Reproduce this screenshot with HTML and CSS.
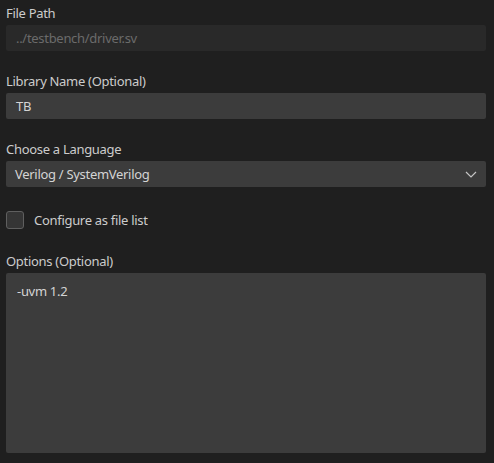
FILE: index.html
```html
<!DOCTYPE html>
<html>
<head>
<meta charset="utf-8">
<link rel="stylesheet" href="styles.css">
</head>
<body>
<div class="form">
  <div class="field">
    <div class="label">File Path</div>
    <div class="input disabled">../testbench/driver.sv</div>
  </div>
  <div class="field">
    <div class="label">Library Name (Optional)</div>
    <div class="input">TB</div>
  </div>
  <div class="field">
    <div class="label">Choose a Language</div>
    <div class="input select">
      <span class="select-text">Verilog / SystemVerilog</span>
      <svg class="chevron" width="12" height="7" viewBox="0 0 12 7"><path d="M1 1 L6 6 L11 1" fill="none" stroke="#c5c5c5" stroke-width="1.2"/></svg>
    </div>
  </div>
  <div class="check-row">
    <span class="checkbox"></span>
    <span class="check-label">Configure as file list</span>
  </div>
  <div class="field options">
    <div class="label">Options (Optional)</div>
    <div class="textarea">-uvm 1.2</div>
  </div>
</div>
</body>
</html>
```

FILE: styles.css
```css
html, body {
  margin: 0;
  padding: 0;
  background: #1f1f1f;
}
body {
  font-family: "Noto Sans", "Open Sans", sans-serif;
  font-size: 13px;
  letter-spacing: -0.3px;
  color: #cccccc;
}
.form {
  padding: 0 8px 0 6px;
  display: flex;
  flex-direction: column;
}
.field {
  display: flex;
  flex-direction: column;
  margin-bottom: 17px;
}
.label {
  padding-top: 4px;
  height: 19px;
  line-height: 19px;
  margin-bottom: 2px;
  color: #cccccc;
}
.input {
  height: 26px;
  line-height: 26px;
  background: #3c3c3c;
  border-radius: 2px;
  padding: 0 10px;
  color: #d4d4d4;
  box-sizing: border-box;
}
.input.disabled {
  background: #292929;
  color: #6b6b6b;
}
.select {
  display: flex;
  align-items: center;
  justify-content: space-between;
  padding: 0 9px 0 9px;
}
.chevron {
  display: block;
}
.check-row {
  display: flex;
  align-items: center;
  gap: 10px;
  margin-top: 7px;
  height: 18px;
}
.checkbox {
  width: 18px;
  height: 18px;
  box-sizing: border-box;
  border: 1px solid #5f5f5f;
  background: #353535;
  border-radius: 3px;
}
.check-label {
  color: #cccccc;
}
.options {
  margin-top: 19px;
  margin-bottom: 0;
}
.textarea {
  height: 180px;
  box-sizing: border-box;
  background: #3c3c3c;
  border-radius: 2px;
  padding: 8px 11px;
  line-height: 20px;
  color: #d4d4d4;
}
```
